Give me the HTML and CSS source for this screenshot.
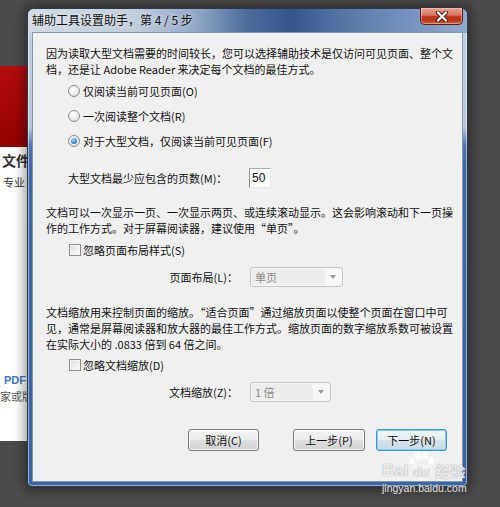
FILE: index.html
```html
<!DOCTYPE html>
<html lang="zh-CN">
<head>
<meta charset="utf-8">
<title>辅助工具设置助手</title>
<link rel="stylesheet" href="styles.css">
</head>
<body>
<div class="desktop">
  <div class="bgpage">
    <div class="bg-red"></div>
    <div class="bg-white">
      <div class="bg-title">文件</div>
      <div class="bg-sub">专业</div>
      <div class="bg-pdf">PDF</div>
      <div class="bg-sub2">家或版</div>
    </div>
  </div>

  <div class="dialog">
    <div class="titlebar">
      <span class="title">辅助工具设置助手，第 4 / 5 步</span>
      <span class="close">
        <svg width="14" height="11" viewBox="0 0 14 11">
          <path d="M3 1.5 L11 9.5 M11 1.5 L3 9.5" stroke="#4a1a12" stroke-width="4.2" stroke-linecap="round"/>
          <path d="M3 1.5 L11 9.5 M11 1.5 L3 9.5" stroke="#ffffff" stroke-width="2.3" stroke-linecap="round"/>
        </svg>
      </span>
    </div>
    <div class="client">
      <p class="para">因为读取大型文档需要的时间较长，您可以选择辅助技术是仅访问可见页面、整个文<br>档，还是让 Adobe Reader 来决定每个文档的最佳方式。</p>

      <div class="radios">
        <div class="opt"><span class="radio"></span><span>仅阅读当前可见页面(O)</span></div>
        <div class="opt"><span class="radio"></span><span>一次阅读整个文档(R)</span></div>
        <div class="opt"><span class="radio on"></span><span>对于大型文档，仅阅读当前可见页面(F)</span></div>
      </div>

      <div class="field field-pages">
        <span class="lbl">大型文档最少应包含的页数(M)：</span>
        <span class="input">50</span>
      </div>

      <p class="para para-2">文档可以一次显示一页、一次显示两页、或连续滚动显示。这会影响滚动和下一页操<br>作的工作方式。对于屏幕阅读器，建议使用“单页”。</p>

      <div class="opt check-row"><span class="check"></span><span>忽略页面布局样式(S)</span></div>

      <div class="field field-sel">
        <span class="lbl right">页面布局(L)：</span>
        <span class="select sel-layout"><span class="sel-text">单页</span><span class="sel-arrow"></span></span>
      </div>

      <p class="para para-3">文档缩放用来控制页面的缩放。“适合页面”通过缩放页面以使整个页面在窗口中可<br>见，通常是屏幕阅读器和放大器的最佳工作方式。缩放页面的数字缩放系数可被设置<br>在实际大小的 .0833 倍到 64 倍之间。</p>

      <div class="opt check-row-2"><span class="check"></span><span>忽略文档缩放(D)</span></div>

      <div class="field field-sel">
        <span class="lbl right">文档缩放(Z)：</span>
        <span class="select sel-zoom"><span class="sel-text">1 倍</span><span class="sel-arrow"></span></span>
      </div>

      <div class="buttons">
        <span class="btn btn-cancel">取消(C)</span>
        <span class="btn btn-prev">上一步(P)</span>
        <span class="btn btn-next">下一步(N)</span>
      </div>
    </div>
  </div>

  <div class="wm">
    <div class="wm-logo">
      <span class="wm-bai">Bai</span>
      <span class="wm-paw">
        <svg width="26" height="14" viewBox="0 0 26 14">
          <ellipse cx="4" cy="10" rx="3" ry="3.6" fill="rgba(255,255,255,0.85)"/>
          <ellipse cx="10" cy="4.5" rx="3.2" ry="3.8" fill="rgba(255,255,255,0.85)"/>
          <ellipse cx="17" cy="4.5" rx="3.2" ry="3.8" fill="rgba(255,255,255,0.85)"/>
          <ellipse cx="23" cy="10" rx="3" ry="3.6" fill="rgba(255,255,255,0.85)"/>
        </svg>
        <span class="wm-du">du</span>
      </span>
      <span class="wm-jy">经验</span>
    </div>
    <div class="wm-url">jingyan.baidu.com</div>
  </div>
</div>
</body>
</html>
```
FILE: styles.css
```css
* { box-sizing: border-box; }
html, body { margin: 0; padding: 0; }
body {
  width: 500px;
  height: 507px;
  overflow: hidden;
  background: #4a4a4a;
  font-family: "Noto Sans CJK SC", "Noto Sans", sans-serif;
}
.desktop {
  position: relative;
  width: 500px;
  height: 507px;
  background: #4a4a4a;
}

/* background page behind the dialog */
.bgpage {
  position: absolute;
  left: 0;
  top: 66px;
  width: 140px;
}
.bg-red {
  height: 81px;
  background: linear-gradient(180deg, #b20c0c 0%, #a10505 60%, #900202 100%);
}
.bg-white {
  height: 294px;
  background: #ffffff;
  padding-top: 4px;
  color: #333;
}
.bg-title {
  font-size: 14px;
  line-height: 18px;
  font-weight: bold;
  padding-left: 2px;
}
.bg-sub {
  font-size: 11px;
  line-height: 16px;
  margin-top: 5px;
  padding-left: 3px;
}
.bg-pdf {
  margin-top: 182px;
  font-family: "Liberation Sans", sans-serif;
  font-size: 11px;
  line-height: 16px;
  font-weight: bold;
  color: #3f76c9;
  padding-left: 4px;
}
.bg-sub2 {
  font-size: 11px;
  line-height: 16px;
  color: #555;
}

/* dialog window */
.dialog {
  position: absolute;
  left: 27px;
  top: 8px;
  width: 441px;
  height: 479px;
  border: 1px solid #2e3a4b;
  border-radius: 7px 7px 5px 5px;
  background: linear-gradient(180deg, #c6d2e0 0px, #b8c7da 118px, #5278b0 136px, #3d68a6 158px, #3a65a4 100%);
  box-shadow: inset 0 0 0 1px rgba(255, 255, 255, 0.45), 0 0 12px 3px rgba(0, 0, 0, 0.4);
  display: flex;
  flex-direction: column;
}
.titlebar {
  height: 24px;
  display: flex;
  align-items: flex-start;
  border-radius: 6px 6px 0 0;
  background: linear-gradient(90deg, #d2dbe6 0%, #c2cedd 24%, #93aac8 38%, #4b6b9c 50%, #34568b 60%, #5f80af 76%, #8fa9cc 100%);
}
.title {
  margin-top: 3px;
  padding-left: 4px;
  font-size: 12px;
  line-height: 16px;
  color: #111;
  text-shadow: 0 0 4px rgba(255, 255, 255, 0.8);
}
.close {
  margin-left: auto;
  margin-right: 4px;
  margin-top: -1px;
  width: 43px;
  height: 17px;
  border: 1px solid #5a1d14;
  border-top: none;
  border-radius: 0 0 5px 5px;
  background: linear-gradient(180deg, #e7a597 0%, #d8735f 45%, #c03a20 52%, #b8321a 75%, #d6603f 100%);
  box-shadow: inset 0 0 0 1px rgba(255, 220, 210, 0.45);
  display: flex;
  align-items: center;
  justify-content: center;
}
.close svg { display: block; }

.client {
  flex: 1;
  margin: 0 5px 5px;
  background: #f0f0f0;
  box-shadow: 0 0 0 1px #8797ae;
  padding: 12px 15px 0 13px;
  font-size: 11px;
  line-height: 16px;
  color: #111;
  display: flex;
  flex-direction: column;
}
.para {
  margin: 0;
  white-space: nowrap;
}
.para-2 { margin-top: 16px; }
.para-3 { margin-top: 17px; }

.radios {
  margin-top: 6px;
  display: flex;
  flex-direction: column;
  gap: 9px;
}
.opt {
  margin-left: 22px;
  height: 16px;
  display: flex;
  align-items: center;
  white-space: nowrap;
}
.radio {
  width: 12px;
  height: 12px;
  border-radius: 50%;
  border: 1px solid #8e8f8f;
  background: radial-gradient(circle at 40% 35%, #ffffff 0%, #ececec 50%, #d2d2d2 100%);
  margin-right: 3px;
  display: flex;
  align-items: center;
  justify-content: center;
  flex: none;
}
.radio.on::after {
  content: "";
  width: 6px;
  height: 6px;
  border-radius: 50%;
  background: radial-gradient(circle at 40% 35%, #a9defb 0%, #3a8ce0 55%, #1c55a8 100%);
}
.check {
  width: 12px;
  height: 12px;
  margin-left: 1px;
  margin-right: 2px;
  border: 1px solid #8e8f8f;
  background: linear-gradient(135deg, #dcdcdc 0%, #efefef 60%, #fbfbfb 100%);
  box-shadow: inset 0 0 0 1px #f4f4f4;
  flex: none;
}
.check-row { margin-top: 6px; }
.check-row-2 { margin-top: 5px; }

.field {
  margin-left: 22px;
  height: 20px;
  display: grid;
  grid-template-columns: 170px auto;
  column-gap: 12px;
  align-items: center;
  white-space: nowrap;
}
.field-pages { margin-top: 19px; }
.field-sel { margin-top: 9px; }
.lbl.right { text-align: right; }

.input {
  width: 22px;
  height: 20px;
  margin-left: -1px;
  background: #ffffff;
  border: 1px solid #e3e9ef;
  border-top-color: #abadb3;
  border-left-color: #8f9299;
  font-family: "Liberation Sans", sans-serif;
  font-size: 12px;
  line-height: 18px;
  padding-left: 2px;
  color: #111;
}
.select {
  height: 20px;
  display: flex;
  border: 1px solid #c4c4c4;
  border-radius: 3px;
  background: #f7f7f7;
  padding: 1px;
}
.sel-layout { width: 93px; }
.sel-zoom { width: 81px; }
.sel-text {
  flex: 1;
  background: #ededed;
  color: #8a8a8a;
  padding-left: 3px;
  line-height: 16px;
}
.sel-arrow {
  width: 16px;
  display: flex;
  align-items: center;
  justify-content: center;
}
.sel-arrow::after {
  content: "";
  border-left: 3.5px solid transparent;
  border-right: 3.5px solid transparent;
  border-top: 4px solid #9a9a9a;
}

.buttons {
  margin-top: 27px;
  display: flex;
  justify-content: flex-end;
}
.btn {
  width: 71px;
  height: 22px;
  border: 1px solid #7a7a7a;
  border-radius: 3px;
  background: linear-gradient(180deg, #f3f3f3 0%, #ececec 48%, #dedede 52%, #d2d2d2 100%);
  box-shadow: inset 0 0 0 1px rgba(255, 255, 255, 0.75);
  display: flex;
  align-items: center;
  justify-content: center;
  color: #111;
  white-space: nowrap;
}
.btn-cancel { margin-right: 34px; }
.btn-prev { width: 72px; margin-right: 11px; }
.btn-next {
  border-color: #3d95d1;
  background: linear-gradient(180deg, #f0f5f8 0%, #e6eef3 48%, #d6e2ea 52%, #cad9e3 100%);
  box-shadow: inset 0 0 0 1px #7fd1f6;
}

/* watermark */
.wm {
  position: absolute;
  left: 382px;
  top: 450px;
  width: 92px;
  display: flex;
  flex-direction: column;
  align-items: flex-start;
  color: rgba(255, 255, 255, 0.85);
  text-shadow: 0 0 1px rgba(80, 80, 80, 0.7);
}
.wm-logo {
  display: flex;
  align-items: flex-end;
  height: 30px;
}
.wm-bai {
  font-family: "Liberation Sans", sans-serif;
  font-weight: bold;
  font-size: 17px;
  line-height: 18px;
}
.wm-paw {
  display: flex;
  flex-direction: column;
  align-items: center;
  width: 26px;
}
.wm-paw svg { display: block; }
.wm-du {
  font-family: "Liberation Sans", sans-serif;
  font-weight: bold;
  font-size: 14px;
  line-height: 15px;
  padding: 0 2px;
  border-radius: 6px 6px 8px 8px;
  background: rgba(255, 255, 255, 0.35);
}
.wm-jy {
  font-size: 15px;
  line-height: 18px;
  font-weight: bold;
  margin-left: 1px;
}
.wm-url {
  font-family: "Liberation Sans", sans-serif;
  font-size: 10.5px;
  line-height: 14px;
  margin-top: 1px;
}
```
